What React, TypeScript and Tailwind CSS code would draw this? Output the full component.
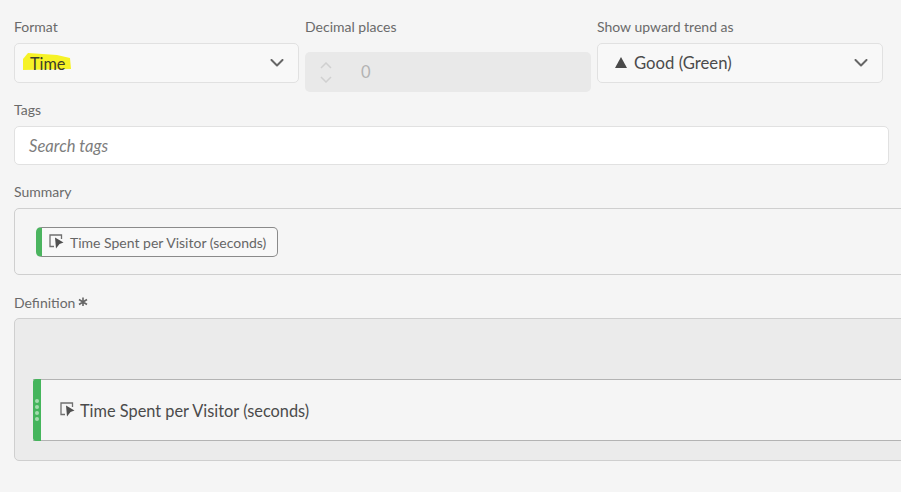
import React from "react";

function Chevron() {
  return (
    <svg width="14" height="9" viewBox="0 0 14 9" className="shrink-0">
      <path d="M1.5 1 L7 6.5 L12.5 1" fill="none" stroke="#666666" strokeWidth="2" strokeLinecap="round" strokeLinejoin="round" />
    </svg>
  );
}

function MetricIcon({ stroke = "#6f6f6f" }: { stroke?: string }) {
  return (
    <svg width="15" height="15" viewBox="0 0 15 15" className="shrink-0">
      <path d="M5 12.5 H1 V1 H12.5 V5" fill="none" stroke={stroke} strokeWidth="1.3" />
      <path d="M6 3.5 L14.5 8.5 L10.5 10 L7 14.5 Z" fill="#505050" />
    </svg>
  );
}

export default function App() {
  return (
    <div className="w-[901px] h-[492px] overflow-hidden bg-[#f5f5f5] pl-[14px] font-['Lato','Noto_Sans',sans-serif] text-[#4b4b4b]">
      <div className="flex gap-[6px] pt-[17px] w-[869px]">
        <div className="w-[285px]">
          <div className="h-[26px] text-[14px] leading-[20px] text-[#6a6a6a]">Format</div>
          <div className="h-[40px] w-[285px] rounded-[5px] border border-[#e1e1e1] bg-[#f8f8f8] flex items-center justify-between pl-[15px] pr-[14px]">
            <span className="relative pt-[2px] text-[16.3px] text-[#3d3d2a]">
              <svg width="50" height="19" viewBox="0 0 50 19" className="absolute left-[-7px] top-[3px]">
                <path d="M5 0 L34 2 L47 5 L48 16 L0 17 L0 6 Z" fill="#f6f226" />
              </svg>
              <span className="relative">Time</span>
            </span>
            <Chevron />
          </div>
        </div>
        <div className="w-[286px]">
          <div className="h-[35px] text-[14px] leading-[20px] text-[#6a6a6a]">Decimal places</div>
          <div className="h-[40px] rounded-[5px] bg-[#e9e9e9] flex items-center pl-[15px]">
            <div className="flex flex-col gap-[7px] w-[16px]">
              <svg width="12" height="7" viewBox="0 0 12 7"><path d="M1 6 L6 1 L11 6" fill="none" stroke="#d0d0d0" strokeWidth="1.5" /></svg>
              <svg width="12" height="7" viewBox="0 0 12 7"><path d="M1 1 L6 6 L11 1" fill="none" stroke="#d0d0d0" strokeWidth="1.5" /></svg>
            </div>
            <span className="ml-[25px] text-[16.5px] text-[#b3b3b3]">0</span>
          </div>
        </div>
        <div className="w-[286px]">
          <div className="h-[26px] text-[14px] leading-[20px] text-[#6a6a6a]">Show upward trend as</div>
          <div className="h-[40px] rounded-[5px] border border-[#e1e1e1] bg-[#f8f8f8] flex items-center justify-between pl-[17px] pr-[14px]">
            <span className="flex items-center gap-[7px] text-[16.7px] text-[#4b4b4b]">
              <svg width="12" height="11" viewBox="0 0 12 11"><path d="M6 0 L12 11 H0 Z" fill="#4a4a4a" /></svg>
              <span className="pt-[2px]">Good (Green)</span>
            </span>
            <Chevron />
          </div>
        </div>
      </div>

      <div className="h-[26px] mt-[8px] text-[14px] leading-[20px] text-[#6a6a6a]">Tags</div>
      <div className="h-[39px] w-[875px] rounded-[5px] border border-[#e1e1e1] bg-white flex items-center pl-[14px]">
        <span className="italic pt-[2px] text-[16.6px] text-[#7d7d7d]">Search tags</span>
      </div>

      <div className="h-[26px] mt-[17px] text-[14px] leading-[20px] text-[#6a6a6a]">Summary</div>
      <div className="h-[67px] w-[1000px] rounded-[5px] border border-[#cfcfcf] flex items-center pl-[21px]">
        <div className="h-[30px] w-[242px] rounded-[5px] border border-[#8a8a8a] border-l-[6px] border-l-[#4bb45f] bg-[#f8f8f8] flex items-center gap-[6px] pl-[7px] text-[14px] text-[#666666]">
          <MetricIcon />
          <span className="pt-[2px]">Time Spent per Visitor (seconds)</span>
        </div>
      </div>

      <div className="flex items-start h-[25px] mt-[18px] text-[14px] leading-[20px] text-[#6a6a6a]">
        <span>Definition</span>
        <svg width="10" height="10" viewBox="0 0 10 10" className="ml-[3px] mt-[4px]">
          <path d="M5 0.5 V9 M1 2.5 L9 7.5 M9 2.5 L1 7.5" fill="none" stroke="#666666" strokeWidth="1.6" />
        </svg>
      </div>
      <div className="h-[143px] w-[1000px] rounded-[5px] border border-[#cfcfcf] bg-[#ebebeb] pt-[60px] pl-[18px]">
        <div className="h-[62px] border-y border-[#b3b3b3] bg-[#f5f5f5] flex items-center">
          <div className="h-[62px] w-[8px] shrink-0 rounded-l-[3px] bg-[#45b55c] flex flex-col items-center justify-center gap-[2.3px]">
            <span className="w-[4px] h-[4px] rounded-full bg-[#a5dcae]"></span>
            <span className="w-[4px] h-[4px] rounded-full bg-[#a5dcae]"></span>
            <span className="w-[4px] h-[4px] rounded-full bg-[#a5dcae]"></span>
            <span className="w-[4px] h-[4px] rounded-full bg-[#a5dcae]"></span>
          </div>
          <div className="flex items-center gap-[5px] pl-[19px] text-[16.35px] text-[#4b4b4b]">
            <MetricIcon />
            <span className="pt-[2px]">Time Spent per Visitor (seconds)</span>
          </div>
        </div>
      </div>
    </div>
  );
}
